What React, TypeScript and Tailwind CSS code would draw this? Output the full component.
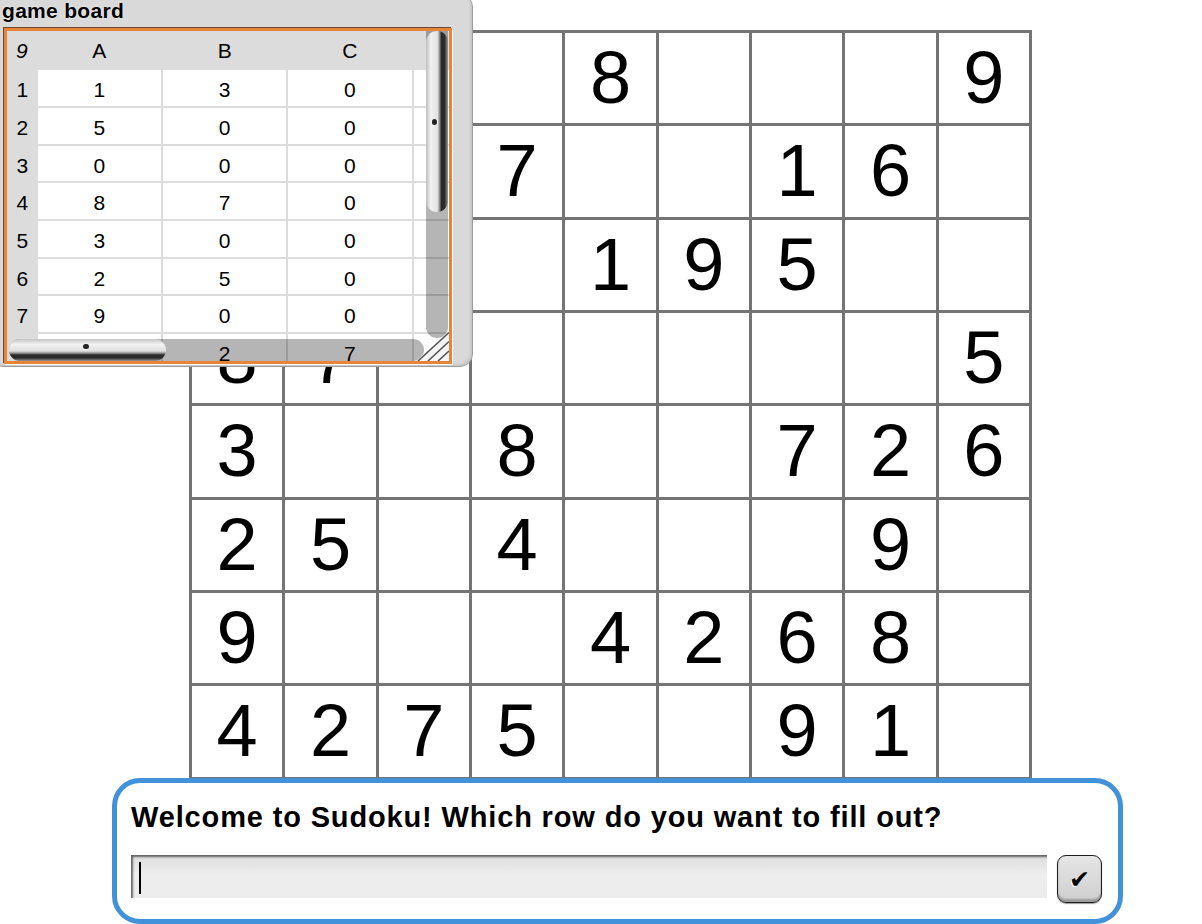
import React from "react";

const board: (number | "")[][] = [
  [1, 3, "", "", 8, "", "", "", 9],
  [5, "", "", 7, "", "", 1, 6, ""],
  ["", "", "", "", 1, 9, 5, "", ""],
  [8, 7, "", "", "", "", "", "", 5],
  [3, "", "", 8, "", "", 7, 2, 6],
  [2, 5, "", 4, "", "", "", 9, ""],
  [9, "", "", "", 4, 2, 6, 8, ""],
  [4, 2, 7, 5, "", "", 9, 1, ""],
  ["", "", "", "", "", "", "", "", ""],
];

const tableRows: number[][] = [
  [1, 3, 0],
  [5, 0, 0],
  [0, 0, 0],
  [8, 7, 0],
  [3, 0, 0],
  [2, 5, 0],
  [9, 0, 0],
  [4, 2, 7],
];

function Watcher() {
  return (
    <div className="absolute left-[-10px] top-[-6px] w-[483px] h-[373px] rounded-[13px] border border-[#9d9d9d] bg-[#d9d9d9] shadow-[inset_-2px_-2px_2px_rgba(0,0,0,0.08),inset_2px_2px_2px_rgba(255,255,255,0.6)]">
      <div className="pl-[11px] pt-[5px] text-[21px] leading-[21px] font-bold text-black tracking-[0.3px] [text-shadow:0_0_2px_#fff]">
        game board
      </div>
      <div className="absolute left-[13px] top-[33px] w-[448px] h-[336px] border-[3px] border-[#e8843a] shadow-[-1px_-1px_0_#6e4a2b,1px_1px_0_#ffffff] overflow-hidden bg-[#dcdcdc]">
        <div className="relative w-full h-full text-[21px] leading-none text-black">
          {/* header */}
          <div className="flex h-[39.3px] items-center">
            <div className="w-[30.7px] shrink-0 text-center italic pr-[1px]">9</div>
            <div className="flex gap-[2px]">
              {["A", "B", "C", ""].map((h, i) => (
                <div key={i} className="w-[123.3px] shrink-0 text-center">
                  {h}
                </div>
              ))}
            </div>
          </div>
          {/* rows */}
          <div className="flex flex-col gap-[2px]">
            {tableRows.map((r, ri) => (
              <div key={ri} className="flex h-[35.7px]">
                <div className="w-[30.7px] shrink-0 flex items-center justify-center pt-[3px]">{ri + 1}</div>
                <div className="flex gap-[2px]">
                  {[...r, null].map((v, ci) => (
                    <div
                      key={ci}
                      className="w-[123.3px] shrink-0 bg-white flex items-center justify-center pt-[3px]"
                    >
                      {v === null ? "" : v}
                    </div>
                  ))}
                </div>
              </div>
            ))}
          </div>
          {/* vertical scrollbar */}
          <div className="absolute left-[419px] top-0 w-[22px] h-[307px] rounded-b-[11px] bg-[rgba(0,0,0,0.29)]">
            <div className="relative w-[22px] h-[181px] rounded-[11px] bg-[linear-gradient(to_right,#bdbdbd_0%,#f2f2f2_22%,#e2e2e2_52%,#8a8a8a_62%,#2a2a2a_70%,#2a2a2a_84%,#9a9a9a_100%)]">
              <div className="absolute left-[6px] top-[88px] w-[5px] h-[6px] rounded-full bg-[#222] shadow-[1px_0_0_#fff]" />
            </div>
          </div>
          {/* horizontal scrollbar */}
          <div className="absolute left-[2px] top-[308px] w-[415px] h-[22px] rounded-[11px] bg-[rgba(0,0,0,0.29)]">
            <div className="relative w-[157px] h-[22px] rounded-[11px] bg-[linear-gradient(to_bottom,#c4c4c4_0%,#f2f2f2_25%,#dedede_55%,#8a8a8a_65%,#2a2a2a_72%,#2a2a2a_86%,#9a9a9a_100%)]">
              <div className="absolute left-[74px] top-[5px] w-[6px] h-[5px] rounded-full bg-[#222] shadow-[0_1px_0_#fff]" />
            </div>
          </div>
          {/* resize handle */}
          <svg className="absolute left-[409px] top-[300px]" width="33" height="30" viewBox="0 0 33 30">
            <polygon points="0,30 33,0 33,30" fill="#f4f4f4" />
            <line x1="2" y1="30" x2="33" y2="1.5" stroke="#555" strokeWidth="1.6" />
            <line x1="12" y1="30" x2="33" y2="10.5" stroke="#555" strokeWidth="1.6" />
            <line x1="22" y1="30" x2="33" y2="20" stroke="#555" strokeWidth="1.6" />
          </svg>
        </div>
      </div>
    </div>
  );
}

function AskBox() {
  return (
    <div className="absolute left-[112px] top-[778px] w-[1011px] h-[146px] rounded-[28px] border-[5px] border-[#4192d8] bg-white pl-[14px] pr-[15px] pt-[20px]">
      <div className="text-[29px] leading-[29px] font-bold text-black whitespace-nowrap tracking-[0.85px]">
        Welcome to Sudoku! Which row do you want to fill out?
      </div>
      <div className="flex items-start gap-[10px] mt-[23px]">
        <div className="relative w-[916px] h-[43px] bg-[linear-gradient(to_bottom,#dcdcdc,#eeeeee_45%,#ececec)] shadow-[inset_2px_2px_2px_rgba(0,0,0,0.55)]">
          <div className="absolute left-[8px] top-[7px] w-[2px] h-[32px] bg-black" />
        </div>
        <div className="w-[45px] h-[48px] rounded-[9px] border-[1.5px] border-[#1e1e1e] bg-[linear-gradient(to_bottom,#e6e6e6,#cfcfcf)] shadow-[inset_0_-3px_2px_rgba(0,0,0,0.25),0_1px_1px_rgba(0,0,0,0.4)] flex items-center justify-center">
          <span className="font-['DejaVu_Sans',sans-serif] text-[25px] leading-none text-black [text-shadow:-1px_1px_0_#fff]">✔</span>
        </div>
      </div>
    </div>
  );
}

export default function App() {
  return (
    <div className="relative w-[1202px] h-[924px] bg-white overflow-hidden font-['Liberation_Sans',Arial,sans-serif]">
      <div className="pl-[189px] pt-[30px]">
        <div className="grid grid-cols-[repeat(9,90.33px)] auto-rows-[90.33px] gap-[3px] p-[3px] bg-[#747474] w-max">
          {board.flat().map((v, i) => (
            <div
              key={i}
              className="bg-white flex items-center justify-center text-[74px] leading-none text-black font-['Liberation_Sans',Arial,sans-serif]"
            >
              {v}
            </div>
          ))}
        </div>
      </div>
      <Watcher />
      <AskBox />
    </div>
  );
}
